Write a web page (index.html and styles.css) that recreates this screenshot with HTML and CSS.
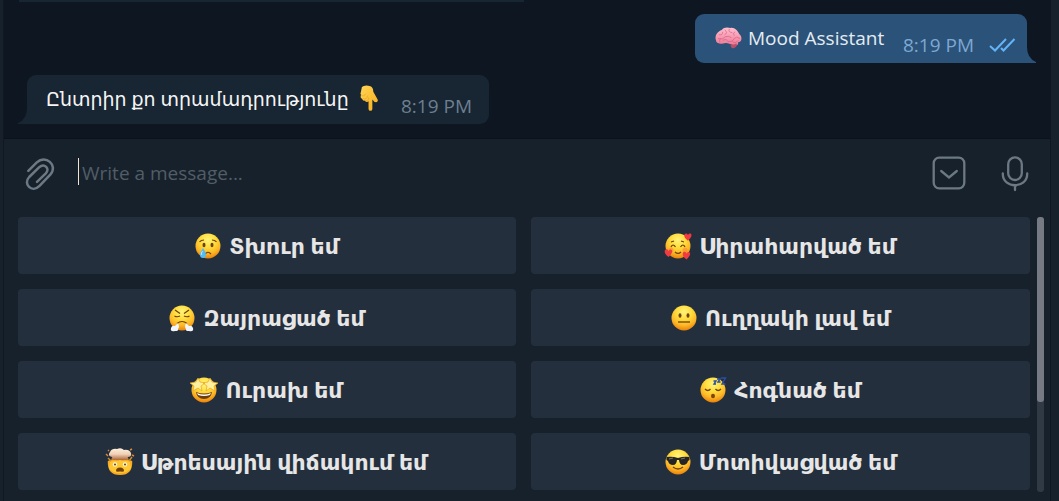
FILE: index.html
```html
<!DOCTYPE html>
<html lang="hy">
<head>
<meta charset="utf-8">
<title>Mood Assistant</title>
<link rel="stylesheet" href="styles.css">
</head>
<body>
<svg class="defs" aria-hidden="true">
  <defs>
    <radialGradient id="face" cx=".5" cy=".26" r=".76">
      <stop offset="0" stop-color="#fff47a"/><stop offset=".4" stop-color="#ffdc3c"/><stop offset=".7" stop-color="#fdb827"/><stop offset="1" stop-color="#e87c08"/>
    </radialGradient>
    <linearGradient id="hand" x1="0" y1="0" x2="1" y2="1"><stop offset="0" stop-color="#ffd659"/><stop offset="1" stop-color="#f9ad18"/></linearGradient>
    <linearGradient id="brain" x1="0" y1="0" x2="0" y2="1"><stop offset="0" stop-color="#ffc0d0"/><stop offset="1" stop-color="#ee7795"/></linearGradient>
    <linearGradient id="cloud" x1="0" y1="0" x2="0" y2="1"><stop offset="0" stop-color="#fff0df"/><stop offset=".5" stop-color="#efd0b4"/><stop offset="1" stop-color="#a85f32"/></linearGradient>
    <path id="heart" d="M0 3.5C-5-.4-3.4-3.4-1.5-3.2Q-.4-3 0-1.8Q.7-3.4 2-3.1C4.2-2.5 3.2.6 0 3.5Z" fill="#f23b41"/>
  </defs>
</svg>
<div class="app">
  <main class="window">
    <section class="chat">
      <div class="previous"></div>
      <article class="bubble outgoing">
        <svg class="brain" viewBox="0 0 28 24"><path d="M1 14C-1 9 3 4 7 3C9 0 13 0 16 1C20 0 24 4 25 7C29 10 28 16 24 16C25 20 20 20 17 18C14 18 13 16 10 17C6 18 1 17 1 14Z" fill="url(#brain)"/><path d="M17 18Q21 19 22 17Q24 20 20 22Q17 23 16 19Z" fill="#b94f6a"/><path d="M4 8Q8 9 8 5M10 3Q14 6 10 8M15 2Q13 5 18 6M21 5Q18 6 20 9M3 12Q8 14 11 10Q14 9 17 11M13 15Q18 16 20 12Q22 9 26 12M8 14Q11 12 13 14M5 16Q4 13 6 12M18 15Q21 18 24 14" fill="none" stroke="#d3607f" stroke-width=".7"/></svg>
        <span class="text">Mood Assistant</span>
        <time>8:19 PM</time>
        <svg class="ticks" viewBox="0 0 26 14"><path d="M1 8L6 12.5L17 1M12 10L14.5 12.5L25.5 1" fill="none" stroke="#62b4fa" stroke-width="2"/></svg>
        <svg class="tail" viewBox="0 0 9 16"><path d="M0 0Q0 11 9 15V16H0Z" fill="#2b5278"/></svg>
      </article>
      <article class="bubble incoming">
        <svg class="tail" viewBox="0 0 9 16"><path d="M9 0Q9 11 0 15V16H9Z" fill="#182533"/></svg>
        <span class="text">Ընտրիր քո տրամադրությունը</span>
        <svg class="hand" viewBox="0 0 20 28"><path d="M2 2Q5-1 11 1Q14 2 14 7L18 14Q20 17 17 18Q15 18 13 15V25Q13 27 11 27Q9 27 9 25V17Q7 19 5 16Q3 17 2 14Q0 14 1 10Q0 9 1 7Z" fill="url(#hand)"/><path d="M1 10Q4 13 6 9M3 14Q7 16 8 11M5 16Q9 18 9 13" fill="none" stroke="#e39c1b" stroke-width=".6"/></svg>
        <time>8:19 PM</time>
      </article>
    </section>
    <section class="composer">
      <svg class="clip" viewBox="0 0 30 34"><path d="M3.3 13.8L11.8 5.4C20.5-2.8 33.3 8.2 25.5 17.4L14.5 28.8C6.8 36.6-2.4 26.8 4.2 20L14 10.4C19.5 5.6 25.4 11.8 20.8 16.4L12 24.8" fill="none" stroke="#6c7883" stroke-width="2.5" stroke-linecap="round"/></svg>
      <span class="caret"></span><span class="placeholder">Write a message...</span>
      <svg class="toggle" viewBox="0 0 34 34"><rect x="1.7" y="1.7" width="30.6" height="30.6" rx="5.5"/><path d="M9.2 15L17 21.4L24.8 15"/></svg>
      <svg class="mic" viewBox="0 0 28 36"><rect x="7.2" y="1.4" width="13.6" height="22.6" rx="6.8"/><path d="M1.8 17.5V18C1.8 33 26.2 33 26.2 18V17.5M14 30V34"/></svg>
    </section>
    <section class="keyboard">
      <div class="keys">
        <button><svg class="emoji" viewBox="0 0 26 26"><circle cx="13" cy="13" r="12.5" fill="url(#face)"/><g fill="#704006"><ellipse cx="9" cy="12" rx="1.5" ry="2.2"/><ellipse cx="17" cy="12" rx="1.5" ry="2.2"/></g><path d="M4.5 9Q6 7 9 7M17 7Q20 7 21.5 9M10 21Q13 17.5 16 21" fill="none" stroke="#704006" stroke-width="1.2"/><path d="M8 15Q5 19 5 22A3 3 0 0 0 11 22Q11 19 8 15" fill="#52bdf5"/><path d="M7.5 18Q6 20 6.4 22" stroke="#b8eaff" fill="none"/></svg><span>Տխուր եմ</span></button>
        <button><svg class="emoji" viewBox="0 0 26 26"><circle cx="13" cy="13" r="12.5" fill="url(#face)"/><path d="M6 14Q8 10 10.5 14M15.5 14Q18 10 20 14M10 19Q13 22 16 19M6 9L9 8M16 8L19 9" fill="none" stroke="#704006" stroke-width="1.2"/><circle cx="6" cy="17" r="2.5" fill="#f87542" opacity=".45"/><circle cx="20" cy="17" r="2.5" fill="#f87542" opacity=".45"/><use href="#heart" transform="translate(23 4) scale(1.1)"/><use href="#heart" transform="translate(3.5 20) scale(1.15)"/><use href="#heart" transform="translate(21.5 22.5) scale(1.15)"/></svg><span>Սիրահարված եմ</span></button>
        <button><svg class="emoji" viewBox="0 0 26 26"><circle cx="13" cy="13" r="12.5" fill="url(#face)"/><path d="M6 5L11 8.5M20 5L15 8.5M5.5 11Q8 12.5 11 11M15 11Q18 12.5 20.5 11M8 18.5Q13 14.5 18 18.5" fill="none" stroke="#704006" stroke-width="1.2"/><g fill="#f1f5fc"><path d="M9 18Q11 22 9 24Q10 26 6 26Q1 27 2 23Q3 20 6 21Z"/><path d="M17 18Q15 22 17 24Q16 26 20 26Q25 27 24 23Q23 20 20 21Z"/></g></svg><span>Զայրացած եմ</span></button>
        <button><svg class="emoji" viewBox="0 0 26 26"><circle cx="13" cy="13" r="12.5" fill="url(#face)"/><g fill="#704006"><ellipse cx="9" cy="10.5" rx="1.5" ry="2.2"/><ellipse cx="17" cy="10.5" rx="1.5" ry="2.2"/></g><path d="M7 17H19" stroke="#704006" stroke-width="1.3"/></svg><span>Ուղղակի լավ եմ</span></button>
        <button><svg class="emoji" viewBox="0 0 26 26"><circle cx="13" cy="13" r="12.5" fill="url(#face)"/><path d="M5 15Q13 18 21 15Q20 22 13 22Q6 22 5 15" fill="#6c3b0e"/><path d="M6 16Q13 19 20 16L19 18Q13 20 7 18Z" fill="#fff"/><path d="M7 1L9 5L14 6L10 9L11 14L7 11L2 14L3 9L-1 6L5 5ZM19 1L21 5L27 6L23 9L24 14L19 11L15 14L16 9L12 6L17 5Z" fill="#fff0a0" stroke="#eaa51b" stroke-width=".7"/></svg><span>Ուրախ եմ</span></button>
        <button><svg class="emoji" viewBox="0 0 26 26"><circle cx="13" cy="13" r="12.5" fill="url(#face)"/><path d="M5 12Q8 15 10.5 12M15.5 12Q18 15 21 12" fill="none" stroke="#704006" stroke-width="1.3"/><ellipse cx="13" cy="19" rx="2" ry="2.3" fill="#80450c"/><path d="M13.5 4H16L14 7H16M17 2H20L18 5H20.5M21 1H25.5L22 7H25.5" fill="none" stroke="#294fa5" stroke-width="1.4"/></svg><span>Հոգնած եմ</span></button>
        <button><svg class="emoji" viewBox="0 0 26 26"><path d="M.8 12Q7 9 13 10Q19 9 25.2 12Q26 26 13 26Q0 26 .8 12Z" fill="#f9a922"/><path d="M3 13Q13 9 23 13L24 19Q21 24 13 24Q5 24 2 19Z" fill="#ffc833"/><path d="M4 10Q8 12 13 11Q18 12 22 10Q20 9 21 8Q25 8 24 4Q22 0 17 1Q14-2 10 0Q5-1 3 3Q0 7 5 8Q6 9 4 10Z" fill="url(#cloud)"/><path d="M1 1L2 2M-1 5L1 7M23 1L25 0M25 6L27 7M1 9L4 12M25 8L22 12" stroke="#d38b35" stroke-width="1.4"/><g fill="#fff3d6"><circle cx="8" cy="15.5" r="2.2"/><circle cx="18" cy="15.5" r="2.2"/></g><g fill="#704006"><circle cx="8" cy="15.5" r="1"/><circle cx="18" cy="15.5" r="1"/><path d="M9 22Q9 18.5 13 18.5Q17 18.5 17 22Q17 23 13 22.5Q9 23 9 22Z"/></g></svg><span>Սթրեսային վիճակում եմ</span></button>
        <button><svg class="emoji" viewBox="0 0 26 26"><circle cx="13" cy="13" r="12.5" fill="url(#face)"/><path d="M1.5 8Q7 7 13 9Q19 7 24.5 8V11L23 12Q22 16 18 16Q14.5 16 14 11H12Q11.5 16 8 16Q4 16 3 12L1.5 11Z" fill="#252525"/><path d="M4 10L8 9M16 10L20 9" stroke="#777" stroke-width="1"/><path d="M8 18Q13 22 18 18" fill="none" stroke="#704006" stroke-width="1.3"/></svg><span>Մոտիվացված եմ</span></button>
      </div>
      <div class="scrollbar"><div class="thumb"></div></div>
    </section>
  </main>
</div>
</body>
</html>
```

FILE: styles.css
```css
* { box-sizing: border-box; }
body { margin: 0; background: #17212b; font-family: "Open Sans", "DejaVu Sans", sans-serif; }
svg { display: block; flex: none; overflow: visible; }
.defs { position: absolute; width: 0; height: 0; }
.app { width: 1059px; height: 501px; padding: 0 8px 0 3px; overflow: hidden; background: #17212b; }
.window { height: 501px; border-right: 1px solid #0e1720; border-left: 1px solid #101921; }
.chat { height: 139px; background: #0e1621; border-bottom: 1px solid #0a121b; }
.previous { width: 505px; height: 2px; margin-left: 15px; background: #182533; }
.bubble { position: relative; display: flex; height: 49px; border-radius: 9px; font-size: 19px; line-height: 26px; white-space: nowrap; }
.text { color: #f5f5f5; }
time { font-size: 19px; line-height: 26px; }
.outgoing { width: 332px; margin: 12px 0 0 691px; padding: 11px 0 0 20px; border-bottom-right-radius: 0; background: #2b5278; }
.outgoing .text { width: 155px; margin-left: 6px; color: #e4ecf2; }
.outgoing time { margin-top: 7px; width: 86px; color: #7da8d3; }
.brain { width: 27px; height: 23px; margin-top: 2px; }
.ticks { width: 26px; height: 14px; margin-top: 13px; }
.tail { position: absolute; width: 9px; height: 16px; bottom: 0; }
.outgoing .tail { right: -9px; }
.incoming { width: 462px; margin: 12px 0 0 23px; padding: 11px 0 0 19px; border-bottom-left-radius: 0; background: #182533; }
.incoming .tail { left: -9px; }
.incoming .text { width: 314px; }
.hand { width: 19px; height: 27px; margin-top: -1px; }
.incoming time { margin: 7px 0 0 22px; color: #6d7f8f; }
.composer { display: flex; height: 70px; padding-left: 21px; }
.clip { width: 30px; height: 34px; margin-top: 18px; }
.caret { width: 1px; height: 27px; margin: 19px 0 0 23px; background: #f4e4d0; }
.placeholder { width: 850px; margin: 21px 0 0 3px; color: #515d67; font-size: 19px; line-height: 26px; }
.toggle { width: 34px; height: 34px; margin-top: 17px; }
.mic { width: 28px; height: 36px; margin: 17px 0 0 35px; }
.toggle, .mic { fill: none; stroke: #6c7883; stroke-width: 2.3; stroke-linecap: round; }
.keyboard { display: flex; gap: 7px; padding: 8px 0 0 14px; }
.keys { display: grid; grid-template-columns: 498px 499px; grid-auto-rows: 57px; gap: 15px; }
button { display: flex; justify-content: center; align-items: center; gap: 8px; padding: 0; border: 0; border-radius: 4px; background: #242f3d; color: #e6e6e6; font: bold 22px/28px "Open Sans", "DejaVu Sans", sans-serif; white-space: nowrap; }
button span { padding-bottom: 2px; }
.emoji { width: 26px; height: 26px; }
.scrollbar { width: 7px; height: 275px; border-radius: 3px; background: #303a44; }
.thumb { height: 185px; border-radius: 3px; background: #767a82; }
```
